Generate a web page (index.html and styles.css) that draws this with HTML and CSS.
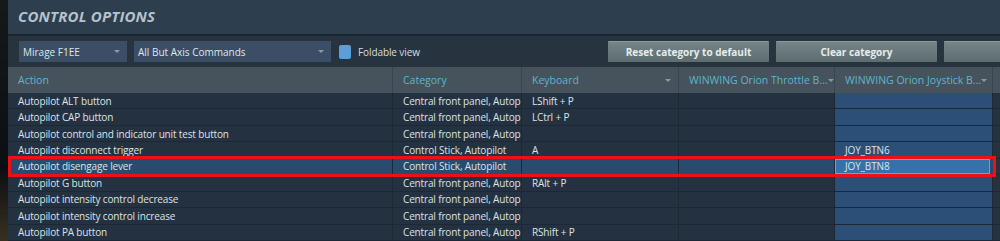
FILE: index.html
```html
<!DOCTYPE html>
<html>
<head>
<meta charset="utf-8">
<link rel="stylesheet" href="styles.css">
</head>
<body>
<div class="screen">
  <div class="edge"></div>
  <div class="panel">
    <div class="titlebar"><h1 class="title">CONTROL OPTIONS</h1></div>
    <div class="toolbar">
      <div class="select sel-aircraft"><span>Mirage F1EE</span><span class="arrow"></span></div>
      <div class="select sel-filter"><span>All But Axis Commands</span><span class="arrow"></span></div>
      <label class="fold"><span class="checkbox"></span>Foldable view</label>
      <div class="spacer"></div>
      <button class="btn btn-reset">Reset category to default</button>
      <button class="btn btn-clear">Clear category</button>
      <button class="btn btn-more"></button>
    </div>
    <div class="table">
      <div class="row head">
        <div class="cell">Action</div>
        <div class="cell">Category</div>
        <div class="cell drop">Keyboard<span class="arrow"></span></div>
        <div class="cell drop">WINWING Orion Throttle B...<span class="arrow"></span></div>
        <div class="cell drop">WINWING Orion Joystick B...<span class="arrow"></span></div>
        <div class="cell"></div>
      </div>
      <div class="row"><div class="cell">Autopilot ALT button</div><div class="cell">Central front panel, Autop</div><div class="cell">LShift + P</div><div class="cell"></div><div class="cell joy"></div><div class="cell last"></div></div>
      <div class="row"><div class="cell">Autopilot CAP button</div><div class="cell">Central front panel, Autop</div><div class="cell">LCtrl + P</div><div class="cell"></div><div class="cell joy"></div><div class="cell last"></div></div>
      <div class="row"><div class="cell">Autopilot control and indicator unit test button</div><div class="cell">Central front panel, Autop</div><div class="cell"></div><div class="cell"></div><div class="cell joy"></div><div class="cell last"></div></div>
      <div class="row"><div class="cell">Autopilot disconnect trigger</div><div class="cell">Control Stick, Autopilot</div><div class="cell">A</div><div class="cell"></div><div class="cell joy">JOY_BTN6</div><div class="cell last"></div></div>
      <div class="row selected"><div class="cell">Autopilot disengage lever</div><div class="cell">Control Stick, Autopilot</div><div class="cell"></div><div class="cell"></div><div class="cell joy active">JOY_BTN8</div><div class="cell last"></div></div>
      <div class="row"><div class="cell">Autopilot G button</div><div class="cell">Central front panel, Autop</div><div class="cell">RAlt + P</div><div class="cell"></div><div class="cell joy"></div><div class="cell last"></div></div>
      <div class="row"><div class="cell">Autopilot intensity control decrease</div><div class="cell">Central front panel, Autop</div><div class="cell"></div><div class="cell"></div><div class="cell joy"></div><div class="cell last"></div></div>
      <div class="row"><div class="cell">Autopilot intensity control increase</div><div class="cell">Central front panel, Autop</div><div class="cell"></div><div class="cell"></div><div class="cell joy"></div><div class="cell last"></div></div>
      <div class="row"><div class="cell">Autopilot PA button</div><div class="cell">Central front panel, Autop</div><div class="cell">RShift + P</div><div class="cell"></div><div class="cell joy"></div><div class="cell last"></div></div>
    </div>
  </div>
</div>
</body>
</html>
```
FILE: styles.css
```css
html, body {
  margin: 0;
  padding: 0;
  background: #121619;
  overflow: hidden;
}
.screen {
  display: flex;
  width: 1000px;
  height: 241px;
  font-family: "Open Sans", "DejaVu Sans", sans-serif;
  font-size: 10px;
  color: #d6dde1;
}
.edge {
  width: 8px;
  flex: none;
  background: linear-gradient(#15191c, #0c0f11 70%, #3a3020);
}
.panel {
  flex: 1;
  display: flex;
  flex-direction: column;
  min-width: 0;
  background: #243140;
}
.titlebar {
  height: 34px;
  background: #2d3e4f;
  border-bottom: 2px solid #1b252f;
  box-sizing: content-box;
  display: flex;
  align-items: center;
  padding-left: 10px;
}
.title {
  margin: 0;
  font-size: 15px;
  font-weight: 700;
  font-style: italic;
  color: #b6c3cc;
  letter-spacing: 0.2px;
  position: relative;
  top: -1px;
}
.toolbar {
  height: 31px;
  background: #27333f;
  display: flex;
  align-items: center;
  padding-left: 11px;
  gap: 7px;
  overflow: hidden;
}
.select {
  height: 21px;
  background: #3b4e66;
  display: flex;
  align-items: center;
  justify-content: space-between;
  padding: 0 7px 0 4px;
  box-sizing: border-box;
  color: #dfe6ea;
  font-size: 10px;
}
.sel-aircraft { width: 108px; }
.sel-filter { width: 197px; }
.select .arrow, .drop .arrow {
  width: 0;
  height: 0;
  border-left: 3px solid transparent;
  border-right: 3px solid transparent;
  border-top: 3px solid #8c9aa4;
}
.fold {
  display: flex;
  align-items: center;
  gap: 7px;
  color: #d6dde1;
  margin-left: 1px;
  letter-spacing: -0.1px;
}
.checkbox {
  width: 12px;
  height: 14px;
  background: #5c9fd8;
  border-radius: 2px;
}
.spacer { flex: 1; }
.btn {
  flex: none;
  height: 21px;
  width: 161px;
  border: none;
  border-top: 1px solid #8b9b9d;
  border-radius: 1px;
  background: linear-gradient(#748487, #5d6c6f);
  color: #e6ecee;
  font-family: "Open Sans", "DejaVu Sans", sans-serif;
  font-weight: 700;
  font-size: 10px;
  padding: 0;
}
.btn-more { width: 80px; margin-right: -24px; }
.table {
  flex: 1;
  display: flex;
  flex-direction: column;
}
.row {
  display: grid;
  grid-template-columns: 385px 129px 157px 156px 158px 7px;
  height: 16.45px;
  background: #233140;
  border-bottom: 1px solid #1c2835;
  box-sizing: border-box;
  position: relative;
  letter-spacing: -0.15px;
  color: #dce3e7;
}
.row.head {
  height: 26px;
  background: #46535c;
  border-bottom: none;
  letter-spacing: 0;
}
.cell {
  display: flex;
  align-items: center;
  padding-left: 10px;
  white-space: nowrap;
  overflow: hidden;
  border-right: 1px solid #1d2935;
  min-width: 0;
}
.head .cell {
  color: #5db5cc;
  font-size: 10.5px;
  border-right: 1px solid #3a464f;
}
.head .cell.drop {
  justify-content: space-between;
  padding-right: 7px;
}
.cell.joy {
  background: #2b4f77;
  border-right-color: #1d2935;
}
.cell.last { background: #26323e; border-right: none; }
.row.selected { background: #294b6d; z-index: 2; }
.row.selected .cell.joy { background: #294b6d; }
.row.selected .cell.joy.active {
  background: #3572ab;
  box-shadow: inset 0 0 0 1px #6fa2cf;
  margin-right: 3px;
  border-right: none;
}
.row.selected::after {
  content: "";
  position: absolute;
  left: 0;
  right: 4px;
  top: -3px;
  bottom: -3px;
  border: 3px solid #ee1018;
  pointer-events: none;
  z-index: 3;
}
```
